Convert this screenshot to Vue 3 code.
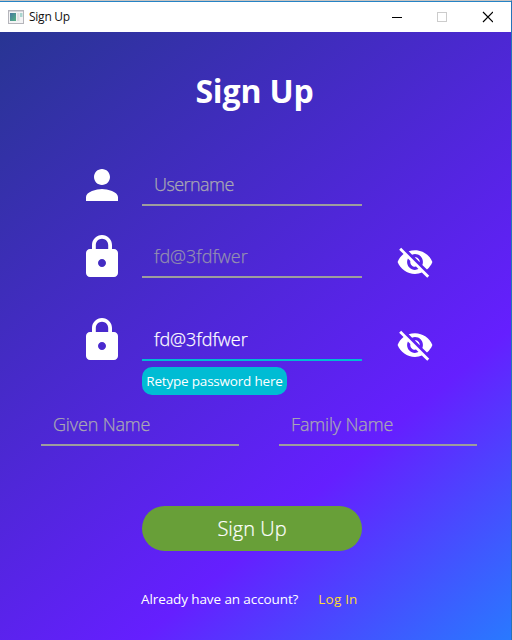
<script setup>
import { ref } from 'vue'

const username = ref('')
const given = ref('')
const family = ref('')
const password = ref('fd@3fdfwer')
const lockPath =
  'M18 8h-1V6c0-2.76-2.24-5-5-5S7 3.24 7 6v2H6c-1.1 0-2 .9-2 2v10c0 1.100.9 2 2 2h12c1.100 0 2-.9 2-2V10c0-1.100-.9-2-2-2zM12 17c-1.100 0-2-.9-2-2s.9-2 2-2 2 .9 2 2-.9 2-2 2zM15.100 8H8.900V6c0-1.710 1.390-3.100 3.100-3.100s3.100 1.390 3.100 3.100v2z'
const eyePath =
  'M12 7c2.76 0 5 2.24 5 5 0 .65-.13 1.26-.36 1.83l2.92 2.92c1.51-1.26 2.7-2.89 3.43-4.75-1.73-4.39-6-7.5-11-7.5-1.4 0-2.74.25-3.98.7l2.16 2.16C10.74 7.13 11.35 7 12 7zM2 4.27l2.28 2.28.46.46C3.08 8.3 1.78 10.02 1 12c1.73 4.39 6 7.5 11 7.5 1.55 0 3.03-.3 4.38-.84l.42.42L19.73 22 21 20.73 3.27 3 2 4.27zM7.53 9.8l1.55 1.55c-.05.21-.08.43-.08.65 0 1.66 1.34 3 3 3 .22 0 .44-.03.65-.08l1.55 1.55c-.67.33-1.41.53-2.2.53-2.76 0-5-2.24-5-5 0-.79.2-1.53.53-2.2zm4.31-.78l3.15 3.15.02-.16c0-1.66-1.34-3-3-3l-.17.01z'
</script>

<template>
  <div class="window">
    <header class="titlebar">
      <svg class="app-icon" width="16" height="14" viewBox="0 0 16 14">
        <defs>
          <linearGradient id="pane" x1="0" y1="0" x2="1" y2="1">
            <stop offset="0" stop-color="#4778a0" />
            <stop offset="1" stop-color="#55b283" />
          </linearGradient>
        </defs>
        <rect x=".5" y=".5" width="15" height="13" fill="#f4f4f5" stroke="#b5b5bb" />
        <path d="M1 1.500h14" stroke="#d4d4da" />
        <rect x="2" y="3" width="6" height="8" fill="url(#pane)" />
        <rect x="9" y="3" width="2.500" height="8" fill="#e0e0e2" />
        <rect x="12" y="3" width="2.500" height="4" fill="#a9d5cf" />
      </svg>
      <span class="caption">Sign Up</span>
      <svg class="controls" width="102" height="12" viewBox="0 0 102 12" shape-rendering="crispEdges">
        <path d="M1 6.500h10" stroke="#000" />
        <rect x="46.500" y="1.500" width="9" height="9" fill="none" stroke="#ccc" />
        <path d="M92 1l10 10M102 1l-10 10" stroke="#000" stroke-width="1.200" shape-rendering="auto" />
      </svg>
    </header>

    <main class="form">
      <h1>Sign Up</h1>
      <div class="row user">
        <svg class="person" width="32" height="32" viewBox="4 4 16 16"><path fill="#fff" d="M12 12c2.210 0 4-1.790 4-4s-1.790-4-4-4-4 1.790-4 4 1.790 4 4 4zm0 2c-2.670 0-8 1.340-8 4v2h16v-2c0-2.660-5.330-4-8-4z" /></svg>
        <div class="field"><span class="w-user">{{ username || 'Username' }}</span></div>
      </div>
      <div class="row pass">
        <svg class="lock" width="32" height="42" viewBox="4 1 16 21"><path fill="#fff" :d="lockPath" /></svg>
        <div class="field dim"><span class="w-pass">{{ password }}</span></div>
        <svg class="eye" width="38" height="38" viewBox="0 0 24 24"><path fill="#fff" :d="eyePath" /></svg>
      </div>
      <div class="row repeat">
        <svg class="lock" width="32" height="42" viewBox="4 1 16 21"><path fill="#fff" :d="lockPath" /></svg>
        <div class="field active"><span class="w-pass">{{ password }}</span></div>
        <svg class="eye" width="38" height="38" viewBox="0 0 24 24"><path fill="#fff" :d="eyePath" /></svg>
      </div>
      <div class="hint"><span>Retype password here</span></div>
      <div class="names">
        <div class="field"><span class="w-given">{{ given || 'Given Name' }}</span></div>
        <div class="field"><span class="w-family">{{ family || 'Family Name' }}</span></div>
      </div>
      <button class="submit"><span>Sign Up</span></button>
      <footer>
        <span class="question">Already have an account?</span>
        <a class="login">Log In</a>
      </footer>
    </main>
  </div>
</template>

<style>
body {
  margin: 0;
  overflow: hidden;
}
</style>

<style scoped>
.window {
  box-sizing: border-box;
  width: 512px;
  height: 640px;
  border-top: 1px solid #c9c5c2;
  border-right: 1px solid #2474b8;
  font-family: 'Open Sans', 'Noto Sans', sans-serif;
  overflow: hidden;
  white-space: nowrap;
}
.titlebar {
  box-sizing: border-box;
  height: 31px;
  border-top: 1px solid #2583c5;
  background: #fff;
  display: flex;
  align-items: center;
  padding: 0 18px 0 8px;
}
.app-icon {
  margin-right: 5px;
}
.caption {
  font-size: 12px;
  line-height: 16px;
  letter-spacing: -0.25px;
  color: #111;
}
.controls {
  margin-left: auto;
}
.form {
  height: 608px;
  background: linear-gradient(140deg, #283593 0%, #651fff 70%, #2979ff 100%);
  display: flex;
  flex-direction: column;
}
h1 {
  margin: 35px 2px 0 0;
  height: 48px;
  line-height: 48px;
  text-align: center;
  color: #fff;
  font-size: 32px;
  font-weight: 700;
  letter-spacing: -0.15px;
}
.row {
  display: grid;
  grid-template-columns: 32px 220px 38px;
  column-gap: 24px;
  margin-left: 86px;
  height: 42px;
}
.user {
  margin-top: 49px;
}
.pass {
  margin-top: 30px;
}
.repeat {
  margin-top: 41px;
}
.person {
  margin-top: 5px;
}
.lock {
  margin-top: -1px;
}
.eye {
  margin: 7px 0 0 10px;
}
.field {
  box-sizing: border-box;
  height: 42px;
  padding-left: 12px;
  border-bottom: 2px solid #9d9d9d;
  color: #a9a8b3;
  font-size: 18px;
  font-weight: 300;
  -webkit-text-stroke: 0.25px currentColor;
  line-height: 40px;
}
.w-user {
  letter-spacing: -0.55px;
}
.w-pass {
  letter-spacing: 0;
}
.w-given {
  letter-spacing: -0.15px;
}
.w-family {
  letter-spacing: -0.15px;
}
.dim {
  color: #9490b0;
}
.active {
  color: #fff;
  border-color: #00bcd4;
}
.hint {
  width: 145px;
  height: 28px;
  margin: 6px 0 0 142px;
  border-radius: 10px;
  background: #00bcd4;
  color: #fff;
  font-size: 13.500px;
  letter-spacing: -0.2px;
  line-height: 28px;
  text-align: center;
}
.names {
  display: grid;
  grid-template-columns: 198px 198px;
  column-gap: 40px;
  margin: 9px 0 0 41px;
}
.submit {
  width: 220px;
  height: 45px;
  margin: 60px 0 0 142px;
  padding: 0;
  border: 0;
  border-radius: 23px;
  background: #689f38;
  color: #fff;
  font-family: inherit;
  font-size: 20px;
  font-weight: 300;
  -webkit-text-stroke: 0.2px currentColor;
  line-height: 44px;
}
footer {
  display: flex;
  gap: 20px;
  margin: 38px 0 0 141px;
  font-size: 13.500px;
  letter-spacing: -0.1px;
  line-height: 20px;
  color: #fff;
}
.login {
  letter-spacing: 0.2px;
  color: #fdd835;
}
</style>
